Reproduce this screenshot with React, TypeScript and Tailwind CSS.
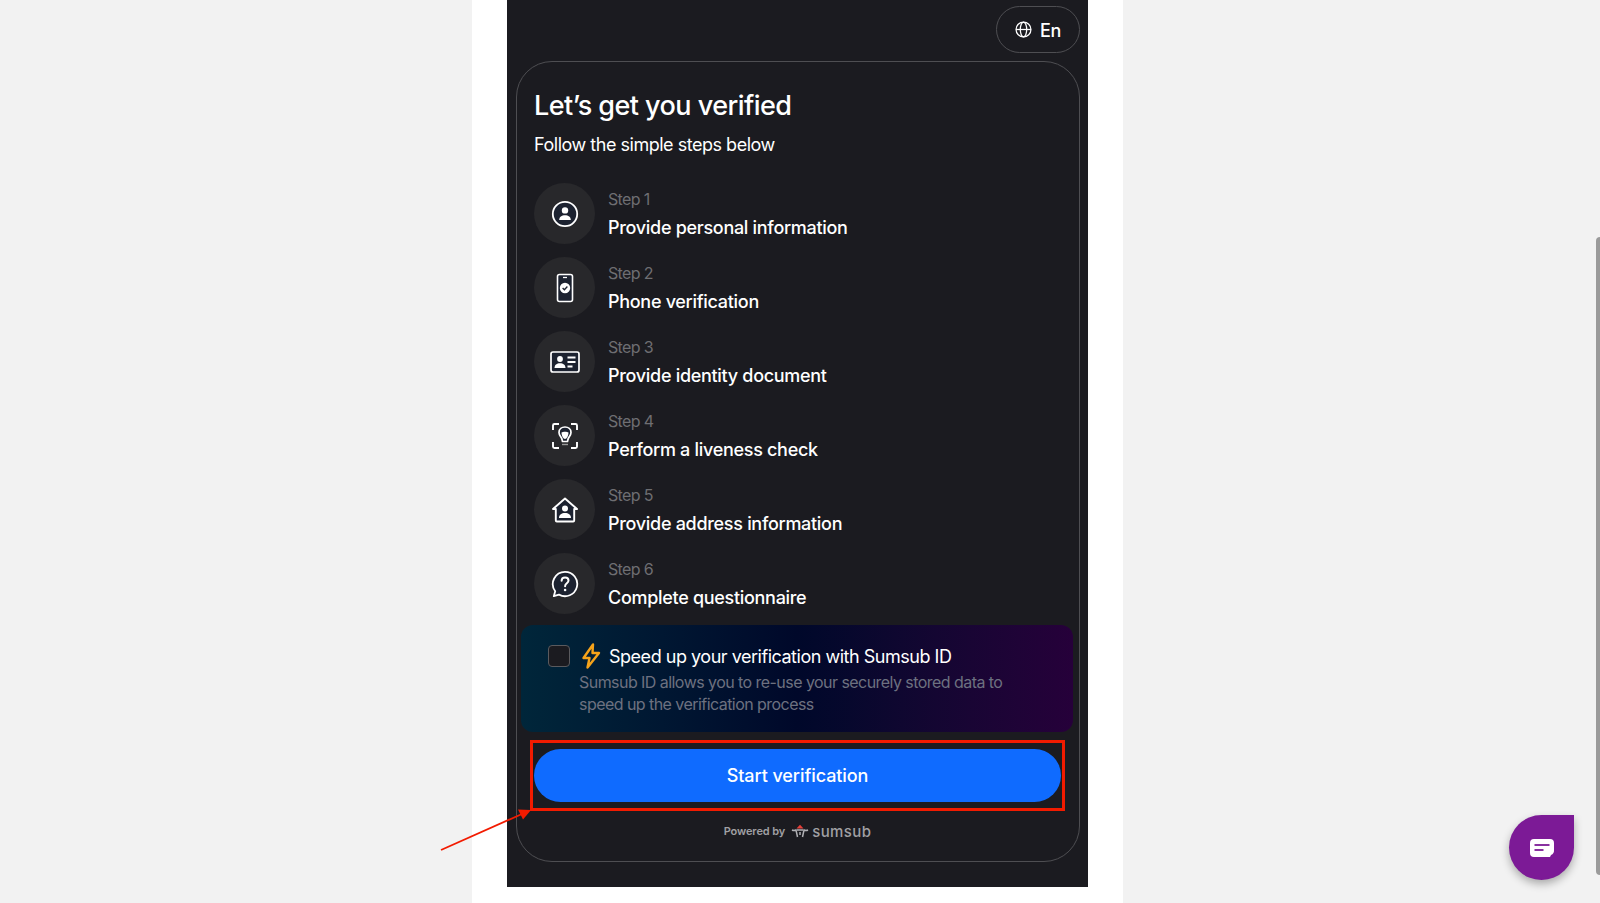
import type { ReactNode } from 'react'

const font = { fontFamily: 'Inter, sans-serif' }

function PersonIcon() {
  return (
    <svg width="28" height="28" viewBox="0 0 28 28" fill="none">
      <circle cx="14" cy="14" r="12.2" fill="#1c2230" stroke="white" strokeWidth="1.8" />
      <circle cx="14" cy="10.400" r="3.200" fill="white" />
      <path d="M8.200 20c0-3.300 2.500-4.800 5.800-4.800s5.800 1.500 5.800 4.800z" fill="white" />
    </svg>
  )
}

function PhoneIcon() {
  return (
    <svg width="28" height="30" viewBox="0 0 28 30" fill="none">
      <rect x="6.500" y="1.500" width="15" height="27" rx="2" fill="#1c2230" stroke="white" strokeWidth="1.600" />
      <path d="M12 4.500h4" stroke="white" strokeWidth="1.300" />
      <circle cx="14" cy="15" r="5.200" fill="white" />
      <path d="M11.600 15l1.800 1.800 3-3.300" stroke="#1c2230" strokeWidth="1.300" />
    </svg>
  )
}

function IdIcon() {
  return (
    <svg width="30" height="24" viewBox="0 0 30 24" fill="none">
      <rect x="1" y="2" width="28" height="20" rx="2" fill="#1c2230" stroke="white" strokeWidth="1.700" />
      <circle cx="10" cy="9" r="2.900" fill="white" />
      <path d="M4.500 18c0-3.300 2.300-4.800 5.500-4.800s5.500 1.500 5.500 4.800z" fill="white" />
      <path d="M17.500 7.500h8M17.500 12h8M17.500 16.500h5" stroke="white" strokeWidth="1.800" />
    </svg>
  )
}

function FaceIcon() {
  return (
    <svg width="28" height="28" viewBox="0 0 28 28" fill="none">
      <path d="M2 8V3.500A1.500 1.500 0 0 1 3.500 2H8M20 2h4.500A1.500 1.500 0 0 1 26 3.500V8M2 20v4.500A1.500 1.500 0 0 0 3.500 26H8M20 26h4.500a1.500 1.500 0 0 0 1.500-1.500V20" stroke="white" strokeWidth="1.900" />
      <path d="M8 10.500C8 6.800 10.800 5 14 5s6 1.800 6 5.500c0 2.500-1.700 4-2.500 5.500-.6 1.200-.7 2.500-1 3.500h-5c-.3-1-.4-2.300-1-3.500C9.700 14.500 8 13 8 10.500z" fill="#1c2230" stroke="white" strokeWidth="1.700" />
      <path d="M10.500 10.500c1.500-1 5.500-1 7 0 0 3-1.800 6.500-3.500 6.500s-3.500-3.500-3.500-6.500z" fill="white" />
      <path d="M11 22.500h6" stroke="#9a9a9a" strokeWidth="1.400" />
    </svg>
  )
}

function HouseIcon() {
  return (
    <svg width="28" height="28" viewBox="0 0 28 28" fill="none">
      <path d="M14 2.500L26 13h-2.800v11.500a1 1 0 0 1-1 1H5.800a1 1 0 0 1-1-1V13H2z" fill="#1c2230" stroke="white" strokeWidth="1.900" strokeLinejoin="round" />
      <circle cx="14" cy="12.500" r="3" fill="white" />
      <path d="M8 22c0-3.300 2.600-5 6-5s6 1.700 6 5z" fill="white" />
    </svg>
  )
}

function QuestionIcon() {
  return (
    <svg width="28" height="28" viewBox="0 0 28 28" fill="none">
      <path d="M14 1.800a12.200 12.200 0 1 1-6 22.800l-5.200 1.600 1.400-5A12.200 12.200 0 0 1 14 1.800z" fill="#1c2230" stroke="white" strokeWidth="1.800" strokeLinejoin="round" />
      <path d="M10.600 10.800c0-2 1.500-3.300 3.500-3.300s3.400 1.300 3.400 3c0 2.800-3.400 2.700-3.400 5.700" stroke="white" strokeWidth="2" strokeLinecap="round" />
      <circle cx="14.100" cy="20" r="1.300" fill="white" />
    </svg>
  )
}

const steps: { label: string; title: string; icon: ReactNode }[] = [
  { label: 'Step 1', title: 'Provide personal information', icon: <PersonIcon /> },
  { label: 'Step 2', title: 'Phone verification', icon: <PhoneIcon /> },
  { label: 'Step 3', title: 'Provide identity document', icon: <IdIcon /> },
  { label: 'Step 4', title: 'Perform a liveness check', icon: <FaceIcon /> },
  { label: 'Step 5', title: 'Provide address information', icon: <HouseIcon /> },
  { label: 'Step 6', title: 'Complete questionnaire', icon: <QuestionIcon /> },
]

export default function App() {
  return (
    <div className="relative h-[903px] overflow-hidden bg-[#f2f2f2] pr-[5px]" style={font}>
      <div className="mx-auto h-full w-[651px] bg-white pl-[35px]">
        <div className="h-[887px] w-[581px] bg-[#1b1b20] pl-[9px] pr-[8px] pt-[6px] text-white">
          {/* Language */}
          <div className="flex justify-end">
            <div className="flex h-[47px] w-[84px] items-center justify-center gap-[8px] rounded-full border border-[#4e4e52]">
              <svg width="17" height="17" viewBox="0 0 24 24" fill="none" stroke="white" strokeWidth="1.800">
                <circle cx="12" cy="12" r="10.500" />
                <ellipse cx="12" cy="12" rx="4.500" ry="10.500" />
                <path d="M1.500 12h21" />
              </svg>
              <span className="mt-[2px] text-[18px] font-medium tracking-[-0.3px]">En</span>
            </div>
          </div>

          {/* Card */}
          <div className="mt-[8px] h-[801px] rounded-[36px] border border-[#4e4e52] pl-[17px] pr-[18px] pt-[26px]">
            <h1 className="text-[27px] leading-[36px] font-medium tracking-[-0.55px]">Let’s get you verified</h1>
            <p className="mt-[9px] text-[18px] leading-[24px] tracking-[-0.48px]">Follow the simple steps below</p>

            <div className="mt-[26px] flex flex-col gap-[13px]">
              {steps.map((step) => (
                <div key={step.label} className="flex h-[61px] items-center gap-[13px]">
                  <div className="flex h-[61px] w-[61px] shrink-0 items-center justify-center rounded-full bg-[#28282b]">
                    {step.icon}
                  </div>
                  <div>
                    <div className="text-[16px] leading-[24px] tracking-[-0.65px] text-[#6e6e72]">{step.label}</div>
                    <div className="mt-[5px] text-[18px] leading-[24px] font-medium tracking-[-0.3px]">{step.title}</div>
                  </div>
                </div>
              ))}
            </div>

            {/* Sumsub ID promo */}
            <div className="ml-[-13px] mr-[-12px] mt-[11px] h-[107px] rounded-[12px] bg-gradient-to-r from-[#00263a] via-[#00082a] to-[#26003a] pl-[27px] pt-[20px]">
              <div className="flex h-[22px] items-center">
                <div className="h-[22px] w-[22px] rounded-[4px] border border-[#5a5a5e] bg-[#1b1b20]" />
                <svg className="ml-[11px]" width="20" height="26" viewBox="0 0 20 26" fill="none">
                  <path d="M12 1.500L2.500 15h6l-2 9.500L18 10h-6.500z" stroke="#f5a31a" strokeWidth="2.400" strokeLinejoin="round" />
                </svg>
                <span className="ml-[8px] text-[18px] tracking-[-0.48px]">Speed up your verification with Sumsub ID</span>
              </div>
              <p className="ml-[31px] mt-[4px] text-[16px] leading-[22px] tracking-[-0.55px] text-[#6d7180]">
                Sumsub ID allows you to re-use your securely stored data to
                <br />
                speed up the verification process
              </p>
            </div>

            {/* Start button */}
            <button className="mt-[17px] flex h-[53px] w-full items-center justify-center rounded-full bg-[#0f6bff] text-[18px] font-medium tracking-[-0.08px] text-white">
              Start verification
            </button>

            {/* Powered by */}
            <div className="mt-[21px] flex items-center justify-center text-[#a0a0a4]">
              <span className="text-[11px] font-semibold tracking-[-0.1px]">Powered by</span>
              <svg className="ml-[6px]" width="18" height="15" viewBox="0 0 18 15" fill="none">
                <path d="M5.500 4.500L9 .8l3.500 3.700z" fill="#e8403a" />
                <path d="M1 6c2 1 4 0 4 0l1.500 7M17 6c-2 1-4 0-4 0l-1.500 7M6 6h6M9 8v3" stroke="#b0b0b4" strokeWidth="1.500" />
              </svg>
              <span className="ml-[3px] text-[15px] font-medium tracking-[0.4px] leading-none">sumsub</span>
            </div>
          </div>
        </div>
      </div>

      {/* Annotation box and arrow */}
      <div className="absolute left-[530px] top-[740px] h-[71px] w-[535px] border-[3px] border-[#f21b00]" />
      <svg className="absolute left-[436px] top-[805px]" width="100" height="50" viewBox="0 0 100 50" fill="none">
        <path d="M5 45L86 9" stroke="#f21b00" strokeWidth="1.800" />
        <path d="M95 5L82 4.500l5 10z" fill="#f21b00" />
      </svg>

      {/* Chat widget */}
      <div className="absolute left-[1509px] top-[815px] flex h-[65px] w-[65px] items-center justify-center rounded-full rounded-tr-[10px] bg-[#7c1a96] shadow-[0_4px_8px_rgba(0,0,0,0.3)]">
        <svg width="26" height="20" viewBox="0 0 26 20" fill="none">
          <path d="M5 1h16a4 4 0 0 1 4 4v7a5 5 0 0 1-3 5l-1 2H5a4 4 0 0 1-4-4V5a4 4 0 0 1 4-4z" fill="white" />
          <path d="M5.500 7h15" stroke="#7c1a96" strokeWidth="1.800" />
          <path d="M5.500 12h9" stroke="#7c1a96" strokeWidth="1.800" />
        </svg>
      </div>

      {/* Scrollbar thumb */}
      <div className="absolute right-0 top-[237px] h-[638px] w-[4px] rounded-l-sm bg-[#9a9a9a]" />
    </div>
  )
}
